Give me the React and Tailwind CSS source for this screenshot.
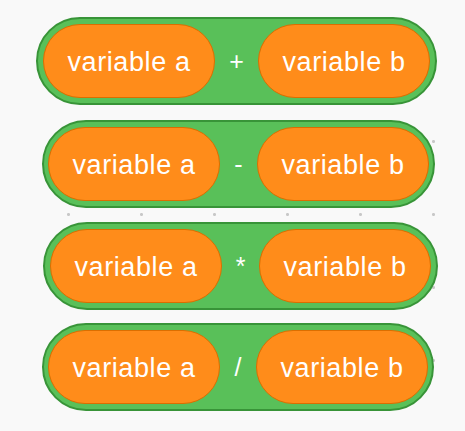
import React from "react";

const rows = [
  { op: "+", block: "mt-[17px] ml-[36px] w-[401px] px-[5px]" },
  { op: "-", block: "mt-[15px] ml-[42px] w-[393px] px-[4px]" },
  { op: "*", block: "mt-[14px] ml-[43px] w-[395px] px-[5px]" },
  { op: "/", block: "mt-[13px] ml-[42px] w-[392px] px-[4px]" },
];

const Pill = ({ label }) => (
  <div className="flex h-[74px] w-[172px] shrink-0 items-center justify-center rounded-full border border-[#db6e00] bg-[#ff8c1a] pt-[3px] text-[27px] tracking-[0.6px] text-white">
    {label}
  </div>
);

const OperatorBlock = ({ op, block }) => (
  <div
    className={`flex h-[88px] items-center rounded-full border-2 border-[#389438] bg-[#59c059] ${block}`}
  >
    <Pill label="variable a" />
    <div className="flex-1 pt-[2px] text-center text-[25px] font-medium text-white">{op}</div>
    <Pill label="variable b" />
  </div>
);

export default function App() {
  return (
    <div
      className="flex h-[431px] w-full flex-col overflow-hidden bg-[#f9f9f9] bg-[radial-gradient(circle,#c8c8c8_1.2px,transparent_1.8px)] bg-[length:73px_73px] bg-[position:32px_32px]"
      style={{ fontFamily: '"Liberation Sans", Arial, sans-serif' }}
    >
      {rows.map((r) => (
        <OperatorBlock key={r.op} op={r.op} block={r.block} />
      ))}
    </div>
  );
}
